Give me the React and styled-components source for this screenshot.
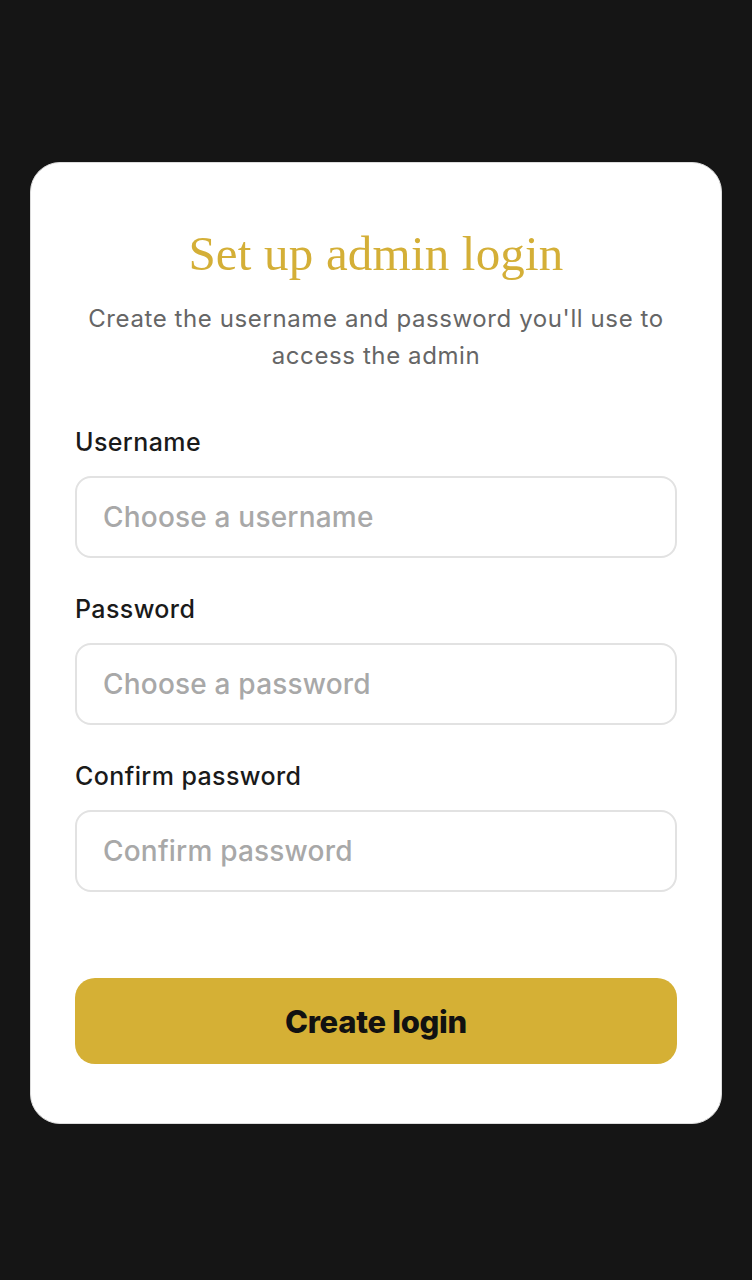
import React from 'react'
import styled, { createGlobalStyle } from 'styled-components'

const Global = createGlobalStyle`
  html, body {
    margin: 0;
    padding: 0;
    background: #151515;
  }
  * { box-sizing: border-box; }
`

const Page = styled.div`
  min-height: 1280px;
  padding: 162px 30px 0;
  background: #151515;
`

const Card = styled.form`
  width: 692px;
  background: #ffffff;
  border: 1px solid #dcdcdc;
  border-radius: 30px;
  padding: 65px 44px 59px;
  display: flex;
  flex-direction: column;
`

const Title = styled.h1`
  margin: 0;
  text-align: center;
  font-family: 'Liberation Serif', 'DejaVu Serif', serif;
  font-weight: 400;
  font-size: 49px;
  line-height: 52px;
  color: #d4af37;
  letter-spacing: 0.2px;
`

const Subtitle = styled.p`
  margin: 20px 0 53px;
  text-align: center;
  font-family: 'Inter', 'Noto Sans', sans-serif;
  font-size: 24px;
  line-height: 37px;
  color: #666666;
  letter-spacing: 0.6px;
`

const Field = styled.label`
  display: flex;
  flex-direction: column;
  gap: 19px;
  margin-bottom: ${p => (p.last ? '86px' : '36px')};
`

const LabelText = styled.span`
  font-family: 'Inter', 'Noto Sans', sans-serif;
  font-weight: 500;
  font-size: 25px;
  line-height: 30px;
  color: #1a1a1a;
  letter-spacing: 0.4px;
`

const Input = styled.input`
  height: 82px;
  width: 100%;
  border: 2px solid #e2e2e2;
  border-radius: 16px;
  padding: 0 26px;
  font-family: 'Inter', 'Liberation Sans', sans-serif;
  font-weight: 500;
  font-size: 28px;
  letter-spacing: 0.2px;
  color: #222;
  background: #fff;
  outline: none;

  &::placeholder {
    color: #a8a8a8;
  }
`

const Button = styled.button`
  height: 86px;
  width: 100%;
  border: none;
  border-radius: 20px;
  background: #d5b035;
  color: #111;
  font-family: 'Inter', 'Roboto', sans-serif;
  font-weight: 800;
  font-size: 31px;
  letter-spacing: -0.3px;
  cursor: pointer;
`

const fields = [
  { label: 'Username', placeholder: 'Choose a username', type: 'text' },
  { label: 'Password', placeholder: 'Choose a password', type: 'password' },
  { label: 'Confirm password', placeholder: 'Confirm password', type: 'password' },
]

export default function App() {
  return (
    <>
      <Global />
      <Page>
        <Card onSubmit={e => e.preventDefault()}>
          <Title>Set up admin login</Title>
          <Subtitle>
            Create the username and password you'll use to access the admin
          </Subtitle>
          {fields.map((f, i) => (
            <Field key={f.label} last={i === fields.length - 1}>
              <LabelText>{f.label}</LabelText>
              <Input type={f.type} placeholder={f.placeholder} />
            </Field>
          ))}
          <Button type="submit">Create login</Button>
        </Card>
      </Page>
    </>
  )
}
